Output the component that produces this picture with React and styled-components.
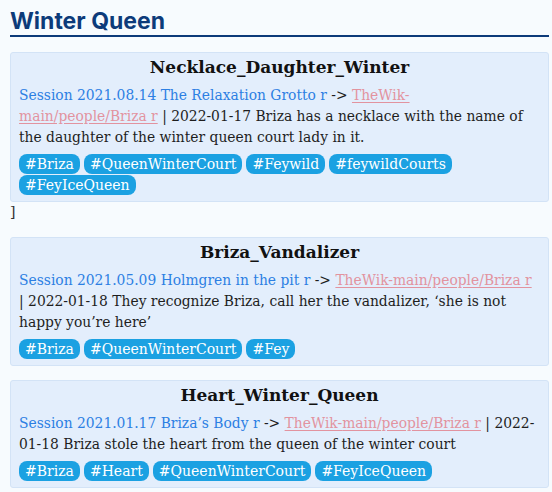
import styled, { createGlobalStyle } from "styled-components";

const GlobalStyle = createGlobalStyle`
  html, body {
    margin: 0;
    padding: 0;
    background: #f7fbfe;
  }
  body {
    font-family: "DejaVu Serif", "Liberation Serif", serif;
    color: #222;
  }
`;

const Page = styled.div`
  padding: 7px 3px 20px 10px;
`;

const Heading = styled.h2`
  margin: 0;
  font-family: Inter, "Liberation Sans", sans-serif;
  font-weight: 700;
  font-size: 23px;
  line-height: 28px;
  color: #0d3b7a;
  border-bottom: 2px solid #0d3b7a;
`;

const Card = styled.div`
  margin-top: ${(props) => props.gap}px;
  background: #e3eefc;
  border: 1px solid #d3e3f6;
  border-radius: 3px;
  padding: 0 8px 6px;
`;

const Title = styled.div`
  text-align: center;
  font-weight: 700;
  font-size: 17px;
  line-height: 28px;
  color: #111;
  margin-bottom: 4px;
`;

const Body = styled.div`
  font-size: 13.85px;
  line-height: 21px;
  color: #1e1e1e;
`;

const SessionLink = styled.span`
  color: #2c7fe3;
`;

const WikiLink = styled.span`
  color: #e2939f;
  text-decoration: underline;
  text-underline-offset: 2px;
`;

const Chunk = styled.span`
  white-space: nowrap;
`;

const Tags = styled.div`
  display: flex;
  flex-wrap: wrap;
  gap: 1px 4px;
  margin-top: 6px;
`;

const Tag = styled.span`
  display: inline-block;
  background: #1ba1e2;
  color: #fff;
  font-size: 14px;
  line-height: 20px;
  height: 20px;
  padding: 0 6px;
  border-radius: 8px;
`;

const Stray = styled.div`
  font-size: 14px;
  line-height: 21px;
  color: #333;
`;

const entries = [
  {
    title: "Necklace_Daughter_Winter",
    session: "Session 2021.08.14 The Relaxation Grotto r",
    text: "2022-01-17 Briza has a necklace with the name of the daughter of the winter queen court lady in it.",
    tags: ["Briza", "QueenWinterCourt", "Feywild", "feywildCourts", "FeyIceQueen"],
    gap: 15,
    stray: true,
  },
  {
    title: "Briza_Vandalizer",
    session: "Session 2021.05.09 Holmgren in the pit r",
    text: "2022-01-18 They recognize Briza, call her the vandalizer, \u2018she is not happy you\u2019re here\u2019",
    tags: ["Briza", "QueenWinterCourt", "Fey"],
    gap: 14,
  },
  {
    title: "Heart_Winter_Queen",
    session: "Session 2021.01.17 Briza\u2019s Body r",
    text: "2022-\u200B01-18 Briza stole the heart from the queen of the winter court",
    tags: ["Briza", "Heart", "QueenWinterCourt", "FeyIceQueen"],
    gap: 14,
  },
];

const App = () => (
  <>
    <GlobalStyle />
    <Page>
      <Heading>Winter Queen</Heading>
      {entries.map((e) => (
        <div key={e.title}>
          <Card gap={e.gap}>
            <Title>{e.title}</Title>
            <Body>
              <SessionLink>{e.session}</SessionLink> -&gt;{" "}
              <WikiLink>
                <Chunk>TheWik-</Chunk>
                <wbr />
                <Chunk>main/people/Briza r</Chunk>
              </WikiLink>{" "}
              | {e.text}
            </Body>
            <Tags>
              {e.tags.map((t) => (
                <Tag key={t}>#{t}</Tag>
              ))}
            </Tags>
          </Card>
          {e.stray && <Stray>]</Stray>}
        </div>
      ))}
    </Page>
  </>
);

export default App;
